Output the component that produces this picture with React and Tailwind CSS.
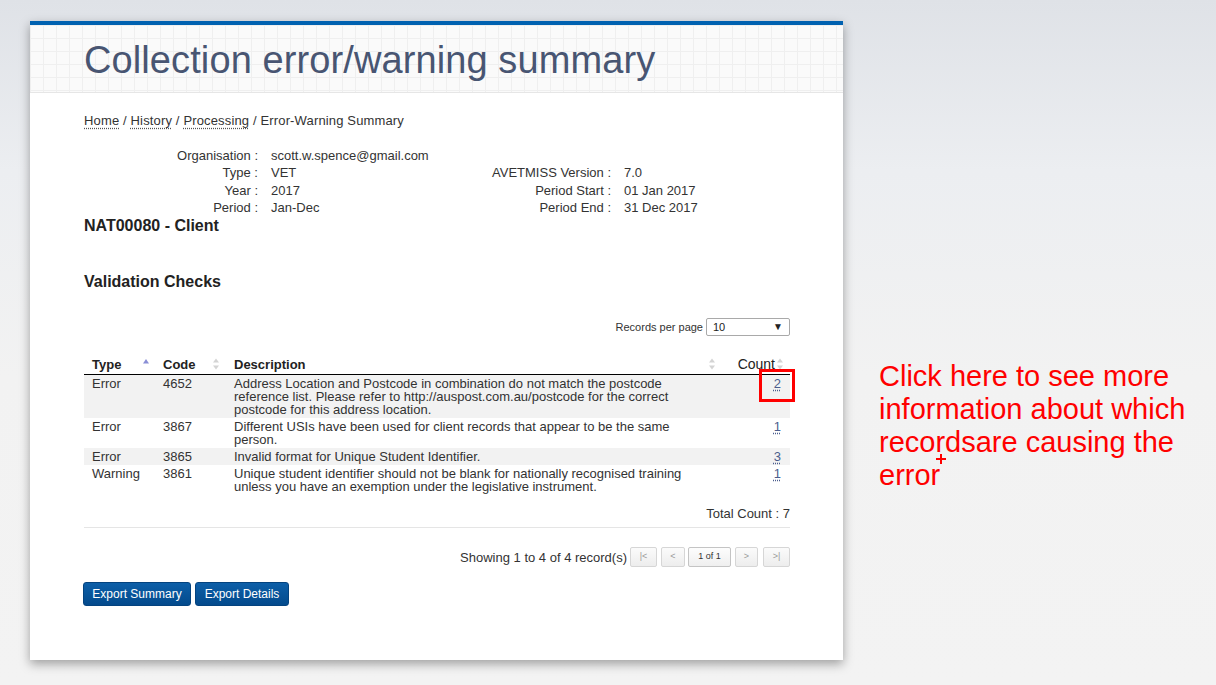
import React from "react";

function SortIcon({ mode }) {
  if (mode === "asc") {
    return (
      <svg width="6" height="12" viewBox="0 0 6 12" className="absolute right-[6px] top-[3px]">
        <polygon points="0,4.5 3,0 6,4.5" fill="#8a8fd6" />
      </svg>
    );
  }
  return (
    <svg width="6" height="12" viewBox="0 0 6 12" className="absolute right-[7px] top-[2px]">
      <polygon points="0,4.5 3,0.5 6,4.5" fill="#d4d4d4" />
      <polygon points="0,7.5 3,11.5 6,7.5" fill="#d4d4d4" />
    </svg>
  );
}

function CountLink({ n, boxed }) {
  return (
    <span className="relative inline-block text-[#4b5d8d] underline decoration-dotted underline-offset-2">
      {n}
      {boxed && (
        <span className="absolute left-[-15px] top-[-8px] w-[36px] h-[33px] border-[3px] border-[#ff0000]" />
      )}
    </span>
  );
}

const rows = [
  {
    type: "Error",
    code: "4652",
    desc: "Address Location and Postcode in combination do not match the postcode reference list. Please refer to http://auspost.com.au/postcode for the correct postcode for this address location.",
    count: "2",
    boxed: true,
  },
  {
    type: "Error",
    code: "3867",
    desc: "Different USIs have been used for client records that appear to be the same person.",
    count: "1",
  },
  {
    type: "Error",
    code: "3865",
    desc: "Invalid format for Unique Student Identifier.",
    count: "3",
  },
  {
    type: "Warning",
    code: "3861",
    desc: "Unique student identifier should not be blank for nationally recognised training unless you have an exemption under the legislative instrument.",
    count: "1",
  },
];

export default function App() {
  return (
    <div className="min-h-[685px] w-full flex items-start bg-[linear-gradient(180deg,#dfe2e7_0%,#eceef1_25%,#f2f2f2_55%,#f3f3f3_100%)] font-['Liberation_Sans',Arial,sans-serif] text-[#333]">
      {/* Card */}
      <div className="ml-[30px] mt-[21px] w-[813px] h-[639px] shrink-0 bg-white border-t-4 border-[#0061b0] shadow-[0_4px_10px_rgba(0,0,0,0.35)] flex flex-col">
        {/* Header */}
        <div className="h-[68px] shrink-0 flex items-center pl-[54px] pt-[3px] border-b border-[#e6e6e6] bg-[#fafafa] bg-[linear-gradient(to_right,#efefef_1px,transparent_1px),linear-gradient(to_bottom,#efefef_1px,transparent_1px)] bg-[size:13px_13px]">
          <h1 className="text-[38px] leading-none text-[#485572] tracking-[0.1px]">
            Collection error/warning summary
          </h1>
        </div>

        {/* Content */}
        <div className="pl-[54px] pr-[53px] flex flex-col">
          {/* Breadcrumb */}
          <div className="mt-[19px] text-[13px] leading-[17px] text-[#333] tracking-[0.15px]">
            <span className="underline decoration-dotted underline-offset-[3px] decoration-[#555]">Home</span>
            {" / "}
            <span className="underline decoration-dotted underline-offset-[3px] decoration-[#555]">History</span>
            {" / "}
            <span className="underline decoration-dotted underline-offset-[3px] decoration-[#555]">Processing</span>
            {" / Error-Warning Summary"}
          </div>

          {/* Info grid */}
          <div className="mt-[18px] grid grid-cols-[174px_200px_127px_auto] gap-x-[13px] text-[13px] leading-[17.3px] text-[#333]">
            <div className="text-right">Organisation :</div>
            <div>scott.w.spence@gmail.com</div>
            <div></div>
            <div></div>

            <div className="text-right">Type :</div>
            <div>VET</div>
            <div className="text-right">AVETMISS Version :</div>
            <div>7.0</div>

            <div className="text-right">Year :</div>
            <div>2017</div>
            <div className="text-right">Period Start :</div>
            <div>01 Jan 2017</div>

            <div className="text-right">Period :</div>
            <div>Jan-Dec</div>
            <div className="text-right">Period End :</div>
            <div>31 Dec 2017</div>
          </div>

          <div className="mt-[1px] text-[16px] leading-[18px] font-bold text-[#222]">NAT00080 - Client</div>

          <div className="mt-[38px] text-[16px] leading-[18px] font-bold text-[#222]">Validation Checks</div>

          {/* Records per page */}
          <div className="mt-[27px] flex justify-end items-center">
            <span className="text-[11px] mr-[3px] text-[#333]">Records per page</span>
            <div className="w-[84px] h-[18px] border border-[#a9a9a9] rounded-[2px] flex items-center justify-between pl-[6px] pr-[6px] text-[11px] text-[#222] bg-white">
              <span>10</span>
              <span className="text-[10px] leading-none">▼</span>
            </div>
          </div>

          {/* Table */}
          <table className="mt-[20px] w-[706px] border-collapse text-[13px] leading-[13px] table-fixed">
            <thead>
              <tr className="border-b border-black">
                <th className="relative w-[71px] pl-[8px] pt-[2px] pb-[3px] text-left font-bold text-[#222]">
                  Type
                  <SortIcon mode="asc" />
                </th>
                <th className="relative w-[71px] pl-[8px] pt-[2px] pb-[3px] text-left font-bold text-[#222]">
                  Code
                  <SortIcon />
                </th>
                <th className="relative pl-[8px] pt-[2px] pb-[3px] text-left font-bold text-[#222]">
                  Description
                  <SortIcon />
                </th>
                <th className="relative w-[68px] pr-[15px] pt-[2px] pb-[3px] text-right font-normal text-[14px] text-[#222]">
                  Count
                  <SortIcon />
                </th>
              </tr>
            </thead>
            <tbody>
              {rows.map((r, i) => (
                <tr key={i} className={i % 2 === 0 ? "bg-[#f2f2f2]" : "bg-white"}>
                  <td className="align-top pl-[8px] py-[2px]">{r.type}</td>
                  <td className="align-top pl-[8px] py-[2px]">{r.code}</td>
                  <td className="align-top pl-[8px] pr-[20px] py-[2px]">{r.desc}</td>
                  <td className="align-top pr-[9px] py-[2px] text-right">
                    <CountLink n={r.count} boxed={r.boxed} />
                  </td>
                </tr>
              ))}
            </tbody>
          </table>

          {/* Total count */}
          <div className="pt-[10px] pb-[5px] text-right text-[13px] leading-[17px] border-b border-[#e5e5e5]">
            Total Count : 7
          </div>

          {/* Pagination */}
          <div className="mt-[19px] flex justify-end items-center">
            <span className="text-[13px] leading-[17px] mr-[3px]">Showing 1 to 4 of 4 record(s)</span>
            <div className="flex items-center">
              <div className="w-[27px] h-[20px] flex items-center justify-center rounded-[2px] border border-[#d6d6d6] bg-[linear-gradient(#fbfbfb,#ededed)] text-[9px] text-[#999]">|&lt;</div>
              <div className="ml-[4px] w-[24px] h-[20px] flex items-center justify-center rounded-[2px] border border-[#d6d6d6] bg-[linear-gradient(#fbfbfb,#ededed)] text-[9px] text-[#999]">&lt;</div>
              <div className="ml-[3px] w-[43px] h-[20px] flex items-center justify-center rounded-[2px] border border-[#c4c4c4] bg-[linear-gradient(#fdfdfd,#efefef)] text-[9px] text-[#333]">1 of 1</div>
              <div className="ml-[4px] w-[23px] h-[20px] flex items-center justify-center rounded-[2px] border border-[#d6d6d6] bg-[linear-gradient(#fbfbfb,#ededed)] text-[9px] text-[#999]">&gt;</div>
              <div className="ml-[5px] w-[27px] h-[20px] flex items-center justify-center rounded-[2px] border border-[#d6d6d6] bg-[linear-gradient(#fbfbfb,#ededed)] text-[9px] text-[#999]">&gt;|</div>
            </div>
          </div>

          {/* Export buttons */}
          <div className="mt-[15px] -ml-[1px] flex items-center gap-[4px]">
            <button className="w-[108px] h-[24px] rounded-[3px] border border-[#04437f] bg-[linear-gradient(#0d5fa8,#034a8c)] text-white text-[12px] leading-none">
              Export Summary
            </button>
            <button className="w-[94px] h-[24px] rounded-[3px] border border-[#04437f] bg-[linear-gradient(#0d5fa8,#034a8c)] text-white text-[12px] leading-none">
              Export Details
            </button>
          </div>
        </div>
      </div>

      {/* Annotation */}
      <div className="relative ml-[36px] mt-[360px] text-[29px] leading-[33px] text-[#ff0000] whitespace-nowrap">
        Click here to see more
        <br />
        information about which
        <br />
        recordsare causing the
        <br />
        error
        <svg width="10" height="10" viewBox="0 0 10 10" className="absolute left-[57px] top-[94px]">
          <rect x="4" y="0" width="2" height="10" fill="#ff0000" />
          <rect x="0" y="4" width="10" height="2" fill="#ff0000" />
        </svg>
      </div>
    </div>
  );
}
